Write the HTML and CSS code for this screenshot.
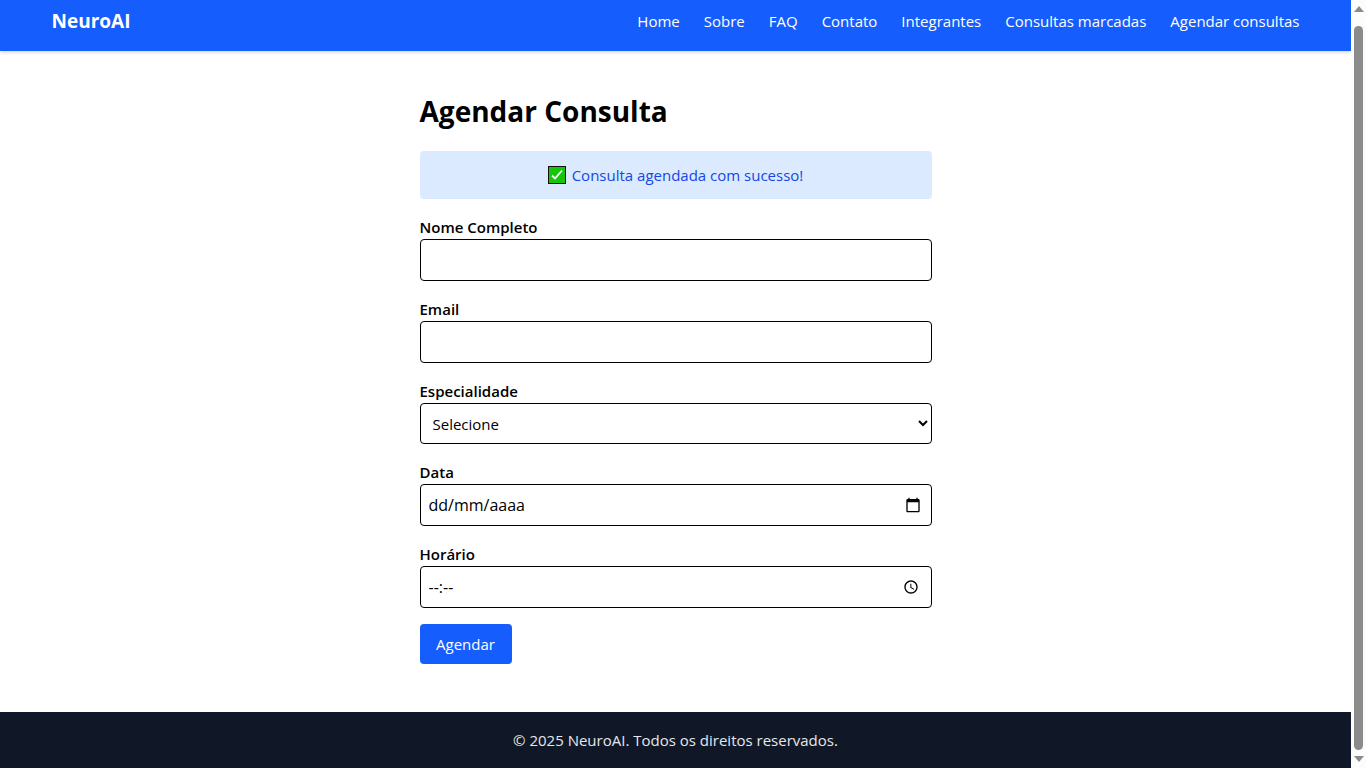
FILE: index.html
```html
<!DOCTYPE html>
<html lang="pt-BR">
<head>
<meta charset="utf-8">
<meta name="viewport" content="width=device-width, initial-scale=1">
<title>NeuroAI - Agendar Consulta</title>
<link rel="stylesheet" href="styles.css">
</head>
<body>
<div class="page">
  <header class="header">
    <div class="header-inner">
      <a class="brand" href="#">NeuroAI</a>
      <nav class="nav">
        <a href="#">Home</a>
        <a href="#">Sobre</a>
        <a href="#">FAQ</a>
        <a href="#">Contato</a>
        <a href="#">Integrantes</a>
        <a href="#">Consultas marcadas</a>
        <a href="#">Agendar consultas</a>
      </nav>
    </div>
  </header>

  <main class="main">
    <h1 class="title">Agendar Consulta</h1>
    <div class="alert" role="status">
      <svg class="alert-icon" viewBox="0 0 18 18" aria-hidden="true">
        <rect x="0.5" y="0.5" width="17" height="17" fill="#16c60c" stroke="#111"/>
        <path d="M4 9.500l3 3 7-8" fill="none" stroke="#fff" stroke-width="1.800"/>
      </svg>
      <span>Consulta agendada com sucesso!</span>
    </div>
    <form class="form">
      <div class="field">
        <label for="nome">Nome Completo</label>
        <input class="control" id="nome" type="text">
      </div>
      <div class="field">
        <label for="email">Email</label>
        <input class="control" id="email" type="email">
      </div>
      <div class="field">
        <label for="especialidade">Especialidade</label>
        <select class="control control-select" id="especialidade">
          <option>Selecione</option>
        </select>
      </div>
      <div class="field">
        <label for="data">Data</label>
        <div class="control control-picker">
          <input id="data" type="text" placeholder="dd/mm/aaaa">
          <button class="picker picker-date" type="button" aria-label="Abrir calendário">
            <svg viewBox="0 0 24 24" width="16" height="16"><path d="M20 3h-1V1h-2v2H7V1H5v2H4c-1.100 0-2 .9-2 2v16c0 1.100.9 2 2 2h16c1.100 0 2-.9 2-2V5c0-1.100-.9-2-2-2zm0 18H4V8h16v13z"/></svg>
          </button>
        </div>
      </div>
      <div class="field">
        <label for="horario">Horário</label>
        <div class="control control-picker">
          <input id="horario" type="text" placeholder="--:--">
          <button class="picker picker-time" type="button" aria-label="Escolher horário">
            <svg viewBox="0 0 24 24" width="16" height="16"><path d="M12 2C6.500 2 2 6.500 2 12s4.500 10 10 10 10-4.500 10-10S17.500 2 12 2zm0 18c-4.400 0-8-3.600-8-8s3.600-8 8-8 8 3.600 8 8-3.600 8-8 8zm.5-13H11v6l5.200 3.200.8-1.300-4.500-2.700V7z"/></svg>
          </button>
        </div>
      </div>
      <button class="submit" type="submit">Agendar</button>
    </form>
  </main>

  <footer class="footer">© 2025 NeuroAI. Todos os direitos reservados.</footer>
</div>
<div class="scrollbar" aria-hidden="true">
  <svg width="10" height="6" viewBox="0 0 10 6"><path d="M5 0l5 6H0z" fill="#8b8b8b"/></svg>
  <div class="thumb"></div>
  <svg width="10" height="6" viewBox="0 0 10 6"><path d="M5 6l5-6H0z" fill="#8b8b8b"/></svg>
</div>
</body>
</html>
```
FILE: styles.css
```css
* {
  box-sizing: border-box;
}

body {
  margin: 0;
  display: flex;
  background: #fff;
  color: #000;
  font: 15px/24px "Segoe UI", "Open Sans", "Noto Sans", sans-serif;
}

.page {
  flex: 1;
  min-width: 0;
  min-height: 100vh;
  display: flex;
  flex-direction: column;
}

.header {
  background: #155dfc;
  color: #fff;
  box-shadow: 0 1px 4px rgba(0, 0, 0, 0.2);
}

.header-inner {
  max-width: 1280px;
  margin: 0 auto;
  padding: 7px 16px 16px;
  display: flex;
  align-items: center;
  justify-content: space-between;
}

.header a {
  color: inherit;
  text-decoration: none;
}

.brand {
  font-size: 19px;
  line-height: 28px;
  font-weight: 700;
}

.nav {
  display: flex;
  gap: 24px;
}

.main {
  flex: 1;
  width: 100%;
  max-width: 544px;
  margin: 0 auto;
  padding: 40px 16px 48px;
}

.title {
  margin: 0 0 20px;
  font-size: 28px;
  line-height: 40px;
  font-weight: 700;
}

.alert {
  display: flex;
  align-items: center;
  justify-content: center;
  gap: 6px;
  margin-bottom: 16px;
  padding: 12px;
  border-radius: 4px;
  background: #dbeafe;
  color: #1447e6;
}

.alert-icon {
  width: 18px;
  height: 18px;
}

.form {
  display: flex;
  flex-direction: column;
  align-items: flex-start;
  gap: 16px;
}

.field {
  width: 100%;
}

.field label {
  display: block;
  font-weight: 600;
}

.control {
  display: block;
  width: 100%;
  height: 42px;
  padding: 8px;
  border: 1px solid #000;
  border-radius: 4px;
  background: #fff;
  color: #000;
  font: inherit;
}

.control-select {
  height: 41px;
}

.control-picker {
  display: flex;
  align-items: center;
  font-size: 16px;
}

.control-picker input {
  flex: 1;
  min-width: 0;
  padding: 0;
  border: 0;
  outline: 0;
  background: none;
  color: inherit;
  font: inherit;
}

.control-picker input::placeholder {
  color: #000;
  opacity: 1;
}

.picker {
  display: flex;
  padding: 0 2px;
  border: 0;
  background: none;
}

.picker-time {
  padding-right: 4px;
}

.submit {
  min-width: 92px;
  padding: 8px 16px;
  border: 0;
  border-radius: 4px;
  background: #155dfc;
  color: #fff;
  font: inherit;
}

.footer {
  padding: 16px;
  background: #101828;
  color: #e5e7eb;
  text-align: center;
}

.scrollbar {
  position: sticky;
  top: 0;
  width: 15px;
  height: 100vh;
  padding: 6px 0;
  display: flex;
  flex-direction: column;
  align-items: center;
  background: #fcfcfc;
}

.thumb {
  flex: 1;
  width: 9px;
  margin: 14px 0 6px;
  border-radius: 5px;
  background: #8b8b8b;
}
```
